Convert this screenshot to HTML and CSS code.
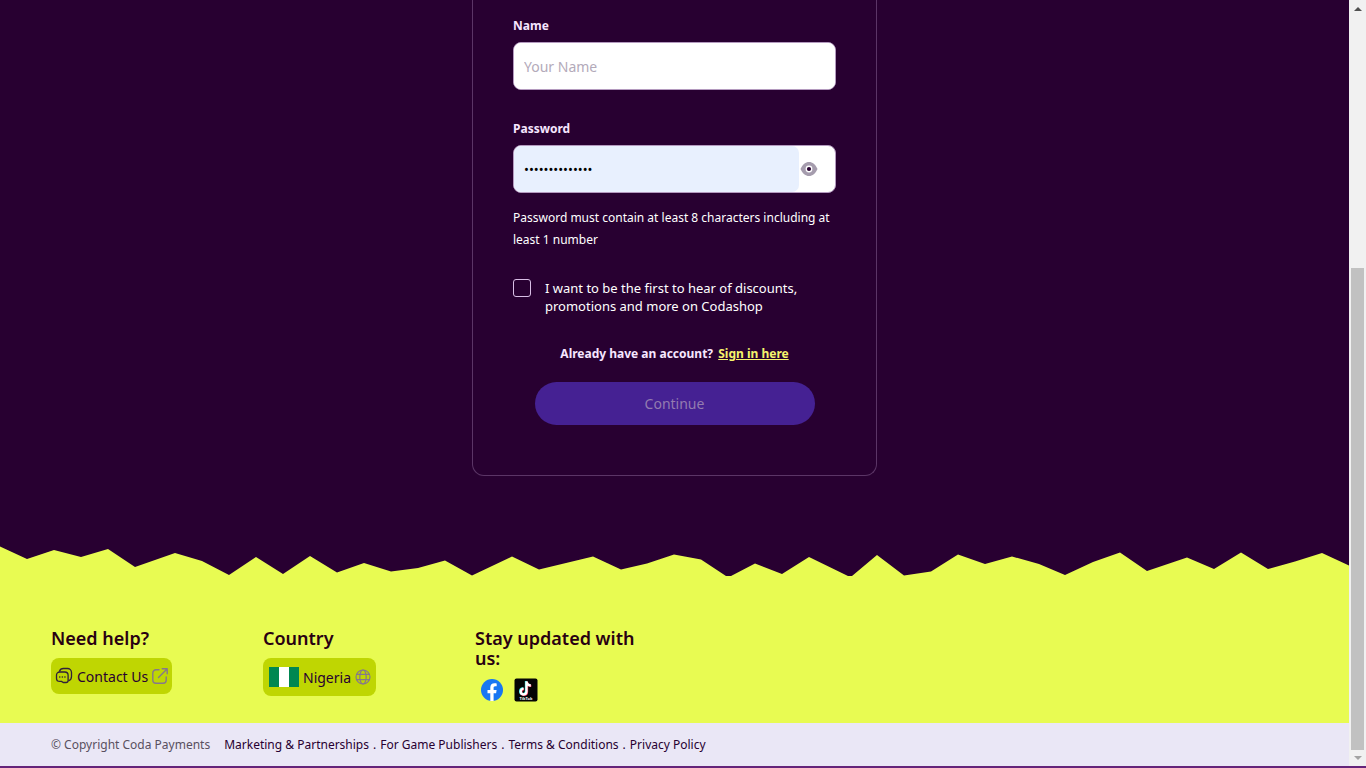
FILE: index.html
```html
<!DOCTYPE html>
<html lang="en">
<head>
<meta charset="utf-8">
<meta name="viewport" content="width=device-width, initial-scale=1">
<title>Codashop - Sign up</title>
<link rel="stylesheet" href="styles.css">
</head>
<body>
<div class="shell">
  <div class="page">
    <main class="main">
      <form class="card">
        <label class="label" for="name">Name</label>
        <div class="field">
          <input class="input" id="name" type="text" placeholder="Your Name">
        </div>
        <label class="label label-next" for="password">Password</label>
        <div class="field">
          <input class="input input-filled" id="password" type="password" value="codashop123456">
          <button class="eye" type="button" aria-label="Show password">
            <svg width="18" height="16" viewBox="0 0 18 16" aria-hidden="true">
              <path d="M.5 8C2.500 3.600 5.500 1 9 1s6.500 2.600 8.500 7c-2 4.400-5 7-8.500 7S2.500 12.400.5 8z" fill="#a59cad"/>
              <circle cx="9" cy="8" r="3.400" fill="#fff"/>
              <circle cx="9" cy="8" r="2.100" fill="#280031"/>
            </svg>
          </button>
        </div>
        <p class="hint">Password must contain at least 8 characters including at least 1 number</p>
        <div class="consent">
          <input class="check" id="promo" type="checkbox">
          <label for="promo">I want to be the first to hear of discounts, promotions and more on Codashop</label>
        </div>
        <p class="signin">Already have an account? <a class="signin-link" href="#">Sign in here</a></p>
        <button class="continue" type="submit" disabled>Continue</button>
      </form>
    </main>

    <svg class="edge" viewBox="0 0 1349 30" preserveAspectRatio="none" aria-hidden="true">
      <path fill="#e8fb52" d="M0 .5 27 13 54 4 81 11 108 3 135 21 175 7 202 15 229 29 256 11 283 28 310 10 337 26.500 364 17 391 25.500 418 22 445 14.500 472 29.500 512 10.500 539 23.500 593 10.500 621 23.500 647 17.500 674 8.500 701 13.500 726 30H731L755 17.500 782 28 809 11 848 30H852L877 9 904 29.500 931 25.500 958 8.500 985 18 1012 10.500 1039 18 1065 29 1093 16 1120 6.500 1147 25 1187 11.500 1214 23 1241 6.500 1268 23 1295 15.500 1322 7 1349 19.500V30H0z"/>
    </svg>

    <footer>
      <div class="columns">
        <section class="column">
          <h2 class="title">Need help?</h2>
          <a class="chip" href="#">
            <svg width="18" height="18" viewBox="0 0 18 18" fill="none" stroke="#30203a" stroke-width="1.300" stroke-linecap="round" stroke-linejoin="round" aria-hidden="true">
              <path d="M4.500 4.200C5 2.600 6.400 1.500 8.500 1.500h4c2.200 0 4 1.800 4 4v4c0 2-1 3.500-2.600 4.200"/>
              <path d="M4.800 5h5c2 0 3.300 1.300 3.300 3.200v5.300c0 1.400-.6 2-2 2H8.200l-1.700-1.100H4.800c-2 0-3.300-1.300-3.300-3.200v-3C1.500 6.300 2.800 5 4.800 5z"/>
              <path d="M4.700 9.900h.1M7.300 9.900h.1M9.900 9.900h.1" stroke-width="1.500"/>
            </svg>
            <span>Contact Us</span>
            <svg width="16" height="16" viewBox="0 0 16 16" fill="none" stroke="#86788c" stroke-width="1.400" stroke-linecap="round" stroke-linejoin="round" aria-hidden="true">
              <path d="M7 1.800H4C2.200 1.800.8 3.200.8 5v7c0 1.800 1.400 3.200 3.200 3.200h7c1.800 0 3.200-1.400 3.200-3.200V9M6.500 9.500 15 1M10.200.8h5v5"/>
            </svg>
          </a>
        </section>
        <section class="column">
          <h2 class="title">Country</h2>
          <button class="chip chip-country" type="button">
            <svg width="30" height="20" viewBox="0 0 30 20" aria-hidden="true">
              <path fill="#008751" d="M0 0h30v20H0z"/>
              <path fill="#fff" d="M10 0h10v20H10z"/>
            </svg>
            <span>Nigeria</span>
            <svg width="16" height="16" viewBox="0 0 16 16" fill="none" stroke="#86788c" stroke-width="1.200" aria-hidden="true">
              <circle cx="8" cy="8" r="7"/>
              <ellipse cx="8" cy="8" rx="3.200" ry="7"/>
              <path d="M1.800 5.300h12.400M1.800 10.700h12.400"/>
            </svg>
          </button>
        </section>
        <section class="column">
          <h2 class="title">Stay updated with us:</h2>
          <div class="social">
            <a href="#" aria-label="Facebook">
              <svg width="24" height="24" viewBox="0 0 24 24" aria-hidden="true">
                <circle cx="12" cy="12" r="11" fill="#1877f2"/>
                <path fill="#fff" d="M10.300 23v-7.700H7.500V12h2.800V9.600c0-2.800 1.600-4.300 4.200-4.300.9 0 1.900.1 2.200.2v2.800h-1.500c-1.300 0-1.600.8-1.600 1.600V12h3l-.5 3.300h-2.500V23z"/>
              </svg>
            </a>
            <a href="#" aria-label="TikTok">
              <svg width="24" height="24" viewBox="0 0 24 24" aria-hidden="true">
                <rect x=".5" y=".5" width="23" height="23" rx="2" fill="#050505"/>
                <g fill="none" stroke-width="2.300">
                  <path stroke="#25f4ee" d="M12 3v10.200a2.900 2.900 0 1 1-2.900-2.900M12 3c.2 2.500 1.900 4 4.300 4.100"/>
                  <path stroke="#fe2c55" d="M13 3.800V14a2.900 2.900 0 1 1-2.900-2.900M13 3.800c.2 2.500 1.900 4 4.300 4.100"/>
                  <path stroke="#fff" d="M12.500 3.400v10.200a2.900 2.900 0 1 1-2.900-2.900M12.500 3.400c.2 2.500 1.900 4 4.300 4.100"/>
                </g>
                <text x="12" y="22" text-anchor="middle" font-size="4" font-weight="700" fill="#fff">TikTok</text>
              </svg>
            </a>
          </div>
        </section>
      </div>
      <div class="legal">
        <span class="copyright">© Copyright Coda Payments</span>
        <nav class="links">
          <a href="#">Marketing &amp; Partnerships</a><span>.</span>
          <a href="#">For Game Publishers</a><span>.</span>
          <a href="#">Terms &amp; Conditions</a><span>.</span>
          <a href="#">Privacy Policy</a>
        </nav>
      </div>
    </footer>
  </div>
  <div class="scrollbar" aria-hidden="true">
    <span class="arrow arrow-up"></span>
    <span class="thumb"></span>
    <span class="arrow arrow-down"></span>
  </div>
</div>
</body>
</html>
```
FILE: styles.css
```css
* { box-sizing: border-box; }

body {
  margin: 0;
  font-family: "Noto Sans", sans-serif;
  font-size: 12px;
  color: #f6e6ff;
  background: #280031;
}

a { color: inherit; text-decoration: none; }
h2, p { margin: 0; }
svg { display: block; flex: none; }
button { font: inherit; cursor: pointer; }

.shell {
  display: flex;
  min-height: 100vh;
  border-bottom: 2px solid #65247a;
}

.page {
  flex: 1;
  min-width: 0;
  display: flex;
  flex-direction: column;
}

.main {
  flex: 1;
  display: flex;
  justify-content: center;
  align-items: flex-start;
  padding-bottom: 70px;
}

.card {
  width: 405px;
  max-width: 100%;
  padding: 18px 40px 50px;
  border: 1px solid #5b3566;
  border-top: 0;
  border-radius: 0 0 12px 12px;
  display: flex;
  flex-direction: column;
}

.label {
  font-weight: 700;
  line-height: 16px;
  margin-bottom: 8px;
}
.label-next { margin-top: 31px; }

.field {
  display: flex;
  height: 48px;
  border: 1px solid #b49abf;
  border-radius: 8px;
  background: #fff;
}

.input {
  flex: 1;
  min-width: 0;
  padding: 0 10px;
  border: 0;
  border-radius: 7px;
  outline: 0;
  background: #fff;
  color: #000;
  font: 14px "Noto Sans", sans-serif;
}
.input::placeholder { color: #b3aaba; }
.input-filled {
  background: #e8f0fe;
  font-size: 13px;
}

.eye {
  width: 36px;
  padding: 0 1px;
  border: 0;
  background: none;
}

.hint {
  margin-top: 14px;
  line-height: 22px;
  color: #fff;
}

.consent {
  display: flex;
  gap: 14px;
  margin-top: 28px;
  font-size: 13px;
  line-height: 18px;
  color: #fff;
}

.check {
  appearance: none;
  flex: none;
  width: 18px;
  height: 18px;
  margin: 0;
  border: 1px solid #d9bfe6;
  border-radius: 3px;
}
.check:checked { background: #e8fb52; }

.signin {
  margin-top: 30px;
  font-weight: 700;
  line-height: 18px;
  text-align: center;
}
.signin-link {
  margin-left: 2px;
  color: #f5f36c;
  text-decoration: underline;
}

.continue {
  align-self: center;
  width: 280px;
  max-width: 100%;
  height: 43px;
  margin-top: 19px;
  border: 0;
  border-radius: 22px;
  background: #452193;
  color: #937bb0;
  font-size: 14px;
}

.edge { width: 100%; height: 30px; }

.columns {
  display: flex;
  min-height: 147px;
  padding: 52px 51px 20px;
  background: #e8fb52;
  color: #280012;
}
.column { width: 212px; padding-right: 40px; }

.title {
  font-size: 18px;
  font-weight: 600;
  line-height: 20px;
}

.chip {
  display: inline-flex;
  align-items: center;
  gap: 4px;
  height: 36px;
  margin-top: 10px;
  padding: 0 4px;
  border: 0;
  border-radius: 8px;
  background: #bfd602;
  color: #280031;
  font-size: 14px;
}
.chip-country { height: 38px; padding: 0 5px 0 6px; }

.social {
  display: flex;
  gap: 10px;
  margin-top: 10px;
  padding-left: 5px;
}

.legal {
  display: flex;
  flex-wrap: wrap;
  gap: 14px;
  padding: 14px 51px 13px;
  background: #eae7f6;
  color: #280031;
  line-height: 16px;
}
.copyright { color: #59505f; }
.links { display: flex; flex-wrap: wrap; gap: 4px; }

.scrollbar {
  flex: none;
  width: 17px;
  display: flex;
  flex-direction: column;
  align-items: center;
  padding: 7px 2px 6px;
  background: #f1f1f1;
}
.thumb {
  width: 13px;
  height: 64%;
  margin-top: auto;
  margin-bottom: 6px;
  background: #c1c1c1;
}
.arrow { border: 4px solid transparent; }
.arrow-up { border-top: 0; border-bottom-color: #505050; }
.arrow-down { border-bottom: 0; border-top-color: #a3a3a3; }
```
